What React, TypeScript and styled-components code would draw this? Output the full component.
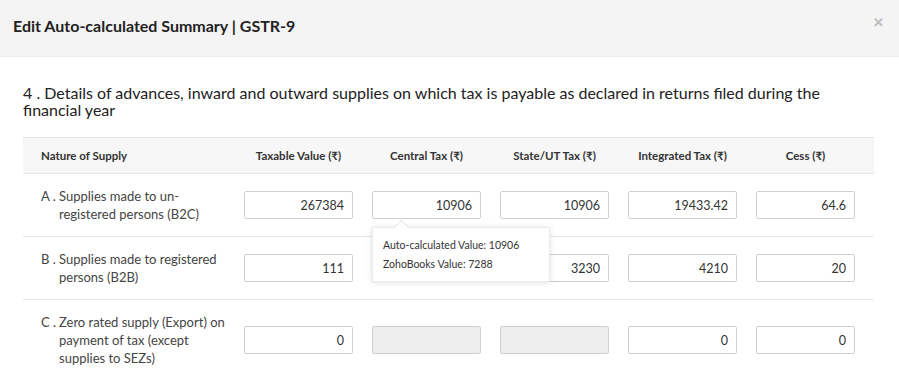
import styled, { createGlobalStyle } from 'styled-components'

const GlobalStyle = createGlobalStyle`
  body {
    margin: 0;
    background: #fff;
    font-family: 'Lato', 'Open Sans', sans-serif;
    color: #333;
  }
`

const Modal = styled.div`
  width: 899px;
  height: 382px;
  overflow: hidden;
  background: #fff;
`

const ModalHeader = styled.header`
  height: 57px;
  box-sizing: border-box;
  padding: 0 13px;
  display: flex;
  align-items: center;
  justify-content: space-between;
  background: #f4f4f4;
  border-bottom: 1px solid #ececec;
`

const Title = styled.h1`
  margin: 0 0 6px;
  font-size: 16px;
  font-weight: 700;
  color: #222;
`

const Close = styled.span`
  margin: 0 2px 12px 0;
  font-size: 13px;
  font-weight: 700;
  color: #bdbdbd;
`

const ModalBody = styled.div`
  padding: 27px 25px 0 23px;
`

const Heading = styled.p`
  margin: 0 0 19px;
  font-size: 16px;
  line-height: 17px;
  color: #222;
`

const Row = styled.div<{ $head?: boolean }>`
  display: grid;
  grid-template-columns: 221px 128px 128px 128px 128px 118px;
  align-items: center;
  box-sizing: border-box;
  min-height: ${p => (p.$head ? '37px' : '63px')};
  padding: ${p => (p.$head ? '0' : '13px 0')};
  background: ${p => (p.$head ? '#f7f7f7' : '#fff')};
  border-top: ${p => (p.$head ? '1px solid #e3e3e3' : 'none')};
  border-bottom: 1px solid #e8e8e8;

  &:last-child {
    border-bottom: none;
  }
`

const HeadCell = styled.div<{ $left?: boolean }>`
  padding: ${p => (p.$left ? '0 0 0 18px' : '0 19px 0 0')};
  text-align: ${p => (p.$left ? 'left' : 'center')};
  font-size: 11.5px;
  font-weight: 700;
  color: #333;
`

const Label = styled.div`
  display: flex;
  padding-left: 18px;
  font-size: 13px;
  line-height: 18px;
  color: #444;
`

const Letter = styled.span`
  width: 18px;
  flex-shrink: 0;
`

const LabelText = styled.span`
  width: 166px;
`

const Cell = styled.div`
  position: relative;
  padding-right: 19px;
`

const Input = styled.input<{ $off?: boolean }>`
  width: 100%;
  height: 28px;
  box-sizing: border-box;
  padding: 0 8px;
  border: 1px solid #cfcfcf;
  border-radius: 2px;
  background: ${p => (p.$off ? '#eeeeee' : '#fff')};
  font-family: inherit;
  font-size: 12.5px;
  color: #333;
  text-align: right;
  outline: none;
`

const Tooltip = styled.div`
  position: absolute;
  top: 36px;
  left: 0;
  z-index: 2;
  width: 178px;
  box-sizing: border-box;
  padding: 8px 10px 7px;
  background: #fff;
  border: 1px solid #ececec;
  box-shadow: 0 1px 6px rgba(0, 0, 0, 0.12);
  font-size: 10.5px;
  line-height: 19px;
  color: #333;

  &::before {
    content: '';
    position: absolute;
    top: -6px;
    left: 23px;
    width: 10px;
    height: 10px;
    background: #fff;
    border-top: 1px solid #e6e6e6;
    border-left: 1px solid #e6e6e6;
    transform: rotate(45deg);
  }
`

type SupplyRow = {
  letter: string
  label: string
  values: (string | null)[]
}

const columns = ['Taxable Value (₹)', 'Central Tax (₹)', 'State/UT Tax (₹)', 'Integrated Tax (₹)', 'Cess (₹)']

const rows: SupplyRow[] = [
  { letter: 'A .', label: 'Supplies made to un-registered persons (B2C)', values: ['267384', '10906', '10906', '19433.42', '64.6'] },
  { letter: 'B .', label: 'Supplies made to registered persons (B2B)', values: ['111', '7288', '3230', '4210', '20'] },
  { letter: 'C .', label: 'Zero rated supply (Export) on payment of tax (except supplies to SEZs)', values: ['0', null, null, '0', '0'] },
]

export default function App() {
  return (
    <Modal>
      <GlobalStyle />
      <ModalHeader>
        <Title>Edit Auto-calculated Summary | GSTR-9</Title>
        <Close>✕</Close>
      </ModalHeader>
      <ModalBody>
        <Heading>
          4 . Details of advances, inward and outward supplies on which tax is payable as declared in returns filed during the financial year
        </Heading>
        <Row $head>
          <HeadCell $left>Nature of Supply</HeadCell>
          {columns.map(c => (
            <HeadCell key={c}>{c}</HeadCell>
          ))}
        </Row>
        {rows.map((r, ri) => (
          <Row key={r.letter}>
            <Label>
              <Letter>{r.letter}</Letter>
              <LabelText>{r.label}</LabelText>
            </Label>
            {r.values.map((v, i) => (
              <Cell key={i}>
                <Input $off={v === null} defaultValue={v ?? ''} disabled={v === null} />
                {ri === 0 && i === 1 && (
                  <Tooltip>
                    <div>Auto-calculated Value: 10906</div>
                    <div>ZohoBooks Value: 7288</div>
                  </Tooltip>
                )}
              </Cell>
            ))}
          </Row>
        ))}
      </ModalBody>
    </Modal>
  )
}
